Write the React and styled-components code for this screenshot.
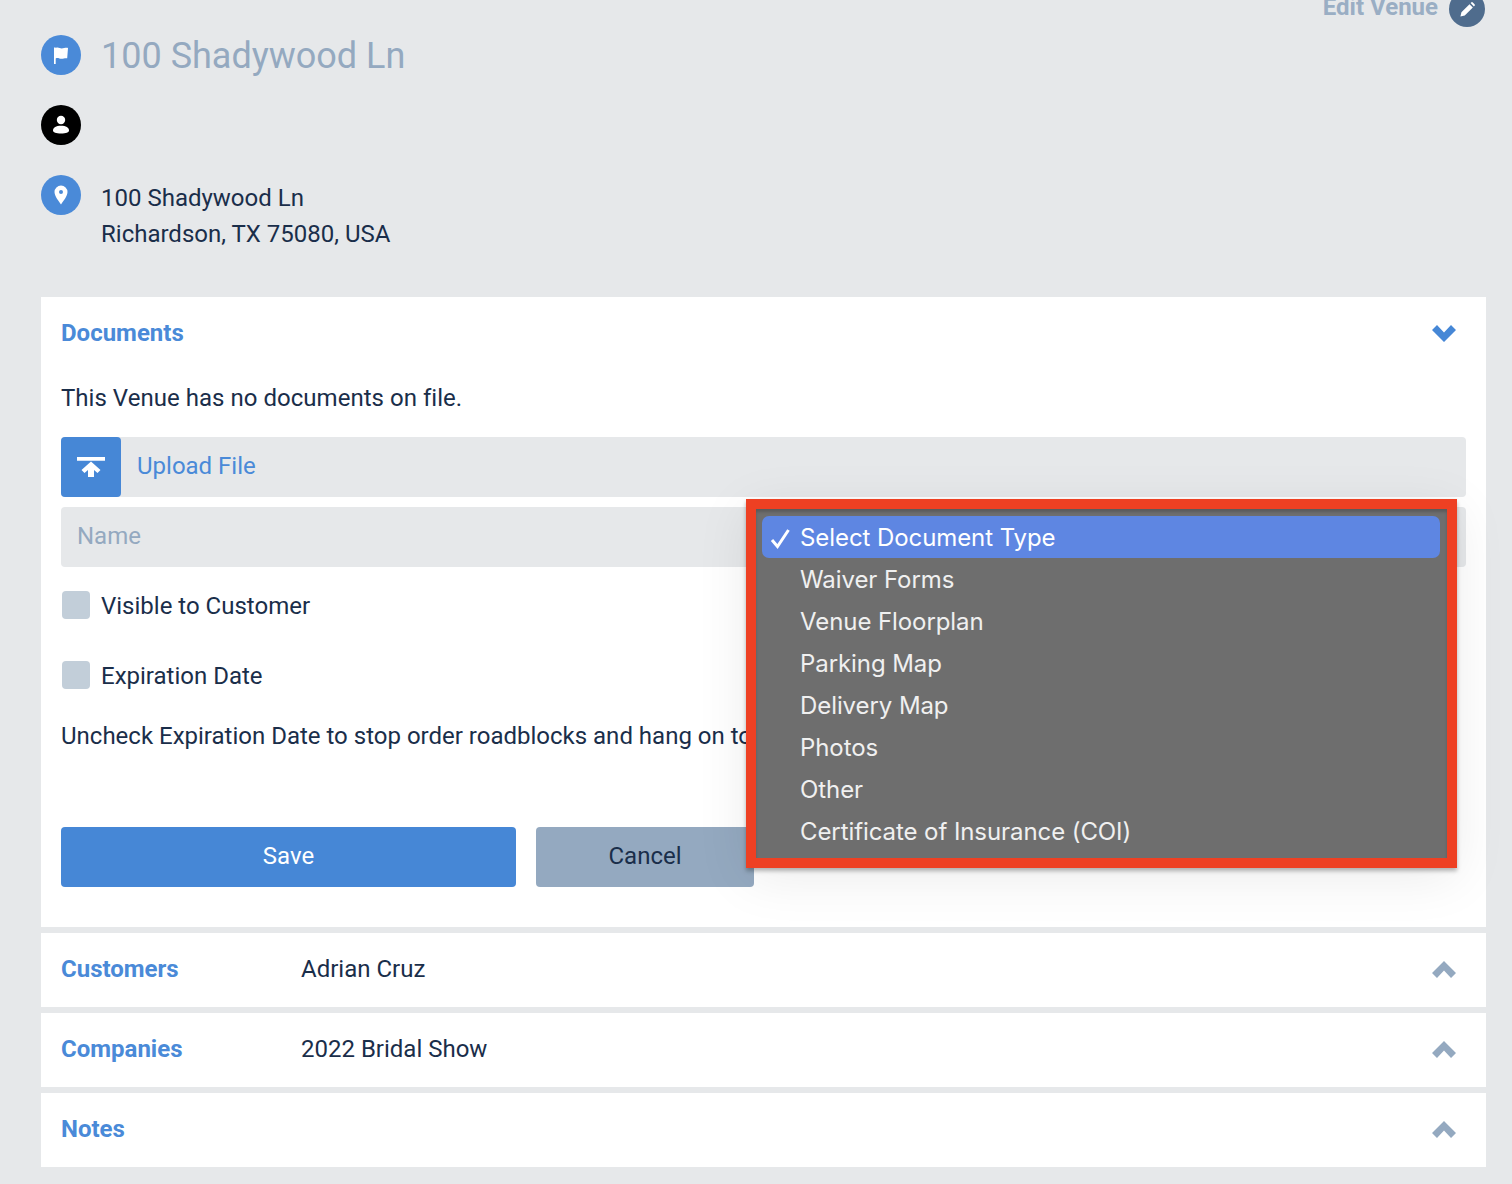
import React from "react";
import styled, { createGlobalStyle } from "styled-components";

const Global = createGlobalStyle`
  html, body { margin: 0; padding: 0; background: #e6e8ea; height: 1184px; overflow: hidden; }
  body { font-family: Roboto, "Liberation Sans", sans-serif; font-size: 24px; color: #1a2e4a; }
  * { box-sizing: border-box; }
`;

const Page = styled.div`
  margin-top: -9px;
  padding: 0 26px 0 41px;
  width: 1512px;
`;
const EditRow = styled.div`
  display: flex;
  justify-content: flex-end;
  align-items: center;
  gap: 11px;
  height: 36px;
  padding-right: 1px;
  margin-bottom: 8px;
`;
const EditLabel = styled.span`
  font-weight: 700;
  color: #9aaec4;
  line-height: 36px;
  margin-bottom: 4px;
`;
const Round = styled.span`
  flex: none;
  display: flex;
  align-items: center;
  justify-content: center;
  width: ${(p) => p.$size || 40}px;
  height: ${(p) => p.$size || 40}px;
  border-radius: 50%;
  background: ${(p) => p.$bg || "#4a8ad8"};
`;
const InfoRow = styled.div`
  display: flex;
  gap: 20px;
  margin-bottom: ${(p) => p.$after || 30}px;
`;
const Title = styled.h1`
  margin: 0;
  height: 40px;
  font-size: 36px;
  font-weight: 400;
  line-height: 42px;
  color: #94a9c0;
`;
const Address = styled.div`
  margin-top: 5px;
  line-height: 36px;
`;
const Card = styled.section`
  position: relative;
  background: #fff;
  margin-bottom: 6px;
  padding: 0 20px;
`;
const CardHead = styled.div`
  display: flex;
  align-items: center;
  height: 74px;
  padding-bottom: 2px;
`;
const CardLabel = styled.span`
  width: 240px;
  flex: none;
  font-weight: 700;
  color: #4a8ad8;
`;
const CardValue = styled.span`
  flex: 1;
`;
const Chevron = styled.svg`
  width: 24px;
  height: 17px;
  margin-right: 10px;
  display: block;
`;
const DocBody = styled.div`
  padding: 0 0 40px;
`;
const Line = styled.p`
  margin: 0;
  line-height: 36px;
  margin-top: ${(p) => p.$top || 0}px;
  letter-spacing: ${(p) => p.$spacing || 0}px;
  white-space: nowrap;
`;
const Upload = styled.div`
  display: flex;
  align-items: center;
  height: 60px;
  margin-top: 21px;
  border-radius: 4px;
  background: #e6e8ea;
  color: #4a8ad8;
`;
const UploadIcon = styled.span`
  display: flex;
  align-items: center;
  justify-content: center;
  width: 60px;
  height: 60px;
  margin-right: 16px;
  border-radius: 4px;
  background: #4687d6;
`;
const UploadText = styled.span`
  margin-bottom: 2px;
`;
const NameInput = styled.input`
  display: block;
  width: 100%;
  height: 60px;
  margin-top: 10px;
  padding: 0 16px 2px;
  border: 0;
  border-radius: 4px;
  background: #e6e8ea;
  font: inherit;
  color: inherit;
  &::placeholder { color: #94a9c0; opacity: 1; }
`;
const CheckRow = styled.label`
  display: flex;
  align-items: center;
  gap: 11px;
  height: 36px;
  padding-left: 1px;
  margin-top: ${(p) => p.$top}px;
`;
const CheckText = styled.span`
  margin-top: 2px;
`;
const Box = styled.span`
  width: 28px;
  height: 28px;
  border-radius: 4px;
  background: #c2ced9;
`;
const Buttons = styled.div`
  display: flex;
  gap: 20px;
  margin-top: 73px;
`;
const Button = styled.button`
  width: ${(p) => p.$w}px;
  height: 60px;
  padding: 0 0 2px;
  border: 0;
  border-radius: 4px;
  font: inherit;
  background: ${(p) => (p.$primary ? "#4687d6" : "#94a9c0")};
  color: ${(p) => (p.$primary ? "#fff" : "#1a2e4a")};
`;
const Menu = styled.ul`
  position: absolute;
  left: 705px;
  top: 202px;
  width: 711px;
  height: 369px;
  margin: 0;
  padding: 7px 7px 5px 6px;
  list-style: none;
  background: #6e6e6e;
  border: 10px solid #ee4023;
  box-shadow: 0 3px 4px rgba(0, 0, 0, 0.28), 0 10px 50px rgba(0, 0, 0, 0.08),
    inset 0 3px 3px rgba(0, 0, 0, 0.18);
  font-family: Inter, Roboto, sans-serif;
`;
const MenuItem = styled.li`
  position: relative;
  height: 42px;
  padding: 1px 0 0 38px;
  line-height: 42px;
  letter-spacing: -0.08px;
  border-radius: 7px;
  color: ${(p) => (p.$selected ? "#fff" : "#f0f0f0")};
  background: ${(p) => (p.$selected ? "#5e86e2" : "transparent")};
`;
const Tick = styled.svg`
  position: absolute;
  left: 8px;
  top: 12px;
  width: 21px;
  height: 21px;
`;

const Down = () => (
  <Chevron viewBox="0 0 24 17">
    <path d="M12 17L0 5l5-5 7 7.500L19 0l5 5z" fill="#4687d6" />
  </Chevron>
);
const Up = () => (
  <Chevron viewBox="0 0 24 17">
    <path d="M12 0L24 12l-5 5-7-7.500L5 17l-5-5z" fill="#94a9c0" />
  </Chevron>
);

const types = ["Waiver Forms", "Venue Floorplan", "Parking Map", "Delivery Map", "Photos", "Other", "Certificate of Insurance (COI)"];

export default function App() {
  return (
    <>
      <Global />
      <Page>
        <EditRow>
          <EditLabel>Edit Venue</EditLabel>
          <Round $size={36} $bg="#4f6c8d">
            <svg width="15" height="15" viewBox="0 0 18 18">
              <path d="M0.500 17.500l1.200-5.200L11.400 2.600l4 4-9.700 9.700z M12.700 1.300l.7-.7a1.400 1.400 0 0 1 2 0l2 2a1.400 1.400 0 0 1 0 2l-.7.7z" fill="#fff" />
            </svg>
          </Round>
        </EditRow>
        <InfoRow>
          <Round>
            <svg width="14" height="17" viewBox="0 0 14 17">
              <path d="M0 .5h1.700V17H0z M1.700 1c2.500-1.400 3.900.5 6 .5 2 0 3.800-1 6.300-.6l-.8 10.400c-2.300-.3-3.800.5-5.600.5-2.200 0-3.700-1.400-5.900-.4z" fill="#fff" />
            </svg>
          </Round>
          <Title>100 Shadywood Ln</Title>
        </InfoRow>
        <InfoRow>
          <Round $bg="#000">
            <svg width="18" height="20" viewBox="0 0 18 20">
              <circle cx="9" cy="5" r="4.200" fill="#fff" />
              <path d="M1 15.500C1 12.500 4 10.800 9 10.800s8 1.700 8 4.700c0 1.800-3 3-8 3s-8-1.200-8-3z" fill="#fff" />
            </svg>
          </Round>
        </InfoRow>
        <InfoRow $after={45}>
          <Round>
            <svg width="14" height="20" viewBox="0 0 14 20">
              <path fillRule="evenodd" d="M7 0.500a6.500 6.500 0 0 1 6.500 6.500C13.500 11 9 16.500 7 19.500 5 16.500.5 11 .5 7A6.500 6.500 0 0 1 7 .5zM7 5a2 2 0 1 0 0 4 2 2 0 0 0 0-4z" fill="#fff" />
            </svg>
          </Round>
          <Address>
            100 Shadywood Ln
            <br />
            Richardson, TX 75080, USA
          </Address>
        </InfoRow>

        <Card>
          <CardHead>
            <CardLabel>Documents</CardLabel>
            <CardValue />
            <Down />
          </CardHead>
          <DocBody>
            <Line $top={9} $spacing={0.03}>This Venue has no documents on file.</Line>
            <Upload>
              <UploadIcon>
                <svg width="28" height="20" viewBox="0 0 28 20">
                  <path d="M0 0h28v3.800H0z M14 4.500l9.500 8.500-3 3-3.500-3v7h-6v-7l-3.500 3-3-3z" fill="#fff" />
                </svg>
              </UploadIcon>
              <UploadText>Upload File</UploadText>
            </Upload>
            <NameInput placeholder="Name" readOnly />
            <CheckRow $top={20}>
              <Box />
              <CheckText>Visible to Customer</CheckText>
            </CheckRow>
            <CheckRow $top={34}>
              <Box />
              <CheckText>Expiration Date</CheckText>
            </CheckRow>
            <Line $top={25}>Uncheck Expiration Date to stop order roadblocks and hang on to</Line>
            <Buttons>
              <Button $primary $w={455}>Save</Button>
              <Button $w={218}>Cancel</Button>
            </Buttons>
          </DocBody>
          <Menu>
            <MenuItem $selected>
              <Tick viewBox="0 0 21 21">
                <path d="M2 12l5.500 6.500L18.500 2" fill="none" stroke="#fff" strokeWidth="3" />
              </Tick>
              Select Document Type
            </MenuItem>
            {types.map((t) => (
              <MenuItem key={t}>{t}</MenuItem>
            ))}
          </Menu>
        </Card>

        <Card>
          <CardHead>
            <CardLabel>Customers</CardLabel>
            <CardValue>Adrian Cruz</CardValue>
            <Up />
          </CardHead>
        </Card>
        <Card>
          <CardHead>
            <CardLabel>Companies</CardLabel>
            <CardValue>2022 Bridal Show</CardValue>
            <Up />
          </CardHead>
        </Card>
        <Card>
          <CardHead>
            <CardLabel>Notes</CardLabel>
            <CardValue />
            <Up />
          </CardHead>
        </Card>
      </Page>
    </>
  );
}
